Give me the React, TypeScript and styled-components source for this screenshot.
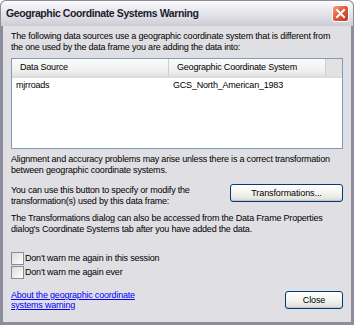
import React from "react";
import styled, { createGlobalStyle } from "styled-components";

const Global = createGlobalStyle`
  html, body { margin: 0; padding: 0; background: #ffffff; }
  body { font-family: "Liberation Sans", Arial, sans-serif; }
`;

const Window = styled.div`
  width: 354px;
  height: 325px;
  box-sizing: border-box;
  display: flex;
  flex-direction: column;
  background: #8d8c9c;
  padding: 0 3px 3px 3px;
  border-radius: 6px 6px 0 0;
  overflow: hidden;
`;

const TitleBar = styled.div`
  height: 26px;
  margin: 0 -3px;
  padding: 0 3px 0 5px;
  display: flex;
  align-items: center;
  justify-content: space-between;
  background: linear-gradient(#fdfdfe 0%, #ececf1 30%, #dcdbe3 70%, #cecdd7 100%);
  border: 1px solid #8d8c9c;
  border-bottom: none;
  border-radius: 6px 6px 0 0;
  box-sizing: border-box;
`;

const Title = styled.div`
  font-family: "Liberation Sans", Arial, sans-serif;
  font-weight: bold;
  font-size: 10.5px;
  color: #1c1c2c;
  letter-spacing: -0.4px;
  margin-top: -1px;
`;

const CloseBtn = styled.div`
  width: 17px;
  height: 17px;
  border: 1px solid #ffffff;
  border-radius: 3px;
  background: linear-gradient(135deg, #f0a58a 0%, #e05d3b 45%, #c13a1e 100%);
  display: flex;
  align-items: center;
  justify-content: center;
  box-sizing: border-box;
  margin-right: 1px;
  margin-top: -1px;
`;

const Body = styled.div`
  flex: 1;
  background: #e0dfe3;
  padding: 4px 8px 0 8px;
  display: flex;
  flex-direction: column;
  font-size: 9px;
  letter-spacing: -0.2px;
  color: #000;
  line-height: 11px;
`;

const Para = styled.p<{ $mt?: number }>`
  margin: ${(p) => p.$mt ?? 0}px 0 0 0;
`;

const SideText = styled(Para)`
  width: 200px;
`;

const List = styled.div`
  margin-top: 5px;
  height: 89px;
  background: #fff;
  border: 1px solid #7f9db9;
  display: flex;
  flex-direction: column;
`;

const HeaderRow = styled.div`
  display: flex;
  height: 19px;
  background: linear-gradient(#fbfbfb, #f0f0f0 70%, #e3e3e3);
  border-bottom: 2px solid #dcdcdc;
  box-sizing: border-box;
`;

const HeaderCell = styled.div<{ $w?: number; $filler?: boolean }>`
  ${(p) => (p.$w ? `width: ${p.$w}px;` : "flex: 1;")}
  display: flex;
  align-items: center;
  padding-left: ${(p) => (p.$filler ? 0 : 8)}px;
  box-sizing: border-box;
  border-right: ${(p) => (p.$filler ? "none" : "1px solid #cfcfcf")};
  background: ${(p) => (p.$filler ? "#e2e2e2" : "transparent")};
  color: #000;
`;

const DataRow = styled.div`
  display: flex;
  height: 14px;
  align-items: center;
`;

const DataCell = styled.div<{ $w?: number }>`
  ${(p) => (p.$w ? `width: ${p.$w}px;` : "flex: 1;")}
  padding-left: 4px;
  box-sizing: border-box;
`;

const ButtonRow = styled.div`
  display: flex;
  justify-content: space-between;
  align-items: flex-start;
  margin-top: 9px;
`;

const Button = styled.button<{ $w: number }>`
  width: ${(p) => p.$w}px;
  height: 18px;
  font-family: "Liberation Sans", Arial, sans-serif;
  font-size: 9px;
  letter-spacing: -0.1px;
  color: #000;
  border: 1px solid #003c74;
  border-radius: 3px;
  background: linear-gradient(#ffffff 0%, #f4f4f0 50%, #e6e5df 85%, #d6d0c5 100%);
  box-shadow: inset 0 -1px 0 #c5c3d6, inset 0 1px 0 #fff;
  padding: 0;
  margin-top: -1px;
`;

const Checks = styled.div`
  margin-top: 17px;
  display: flex;
  flex-direction: column;
  gap: 1px;
`;

const CheckRow = styled.label`
  display: flex;
  align-items: center;
  gap: 1px;
  height: 13px;
`;

const Box = styled.span`
  width: 11px;
  height: 11px;
  border: 1px solid #8a8a9a;
  background: linear-gradient(135deg, #dcdcd7, #ffffff);
  display: inline-block;
`;

const Footer = styled.div`
  margin-top: 11px;
  display: flex;
  justify-content: space-between;
  align-items: center;
`;

const Link = styled.a`
  color: #0000ff;
  text-decoration: underline;
  width: 140px;
  line-height: 10px;
  cursor: pointer;
`;

export default function App() {
  return (
    <>
      <Global />
      <Window>
        <TitleBar>
          <Title>Geographic Coordinate Systems Warning</Title>
          <CloseBtn>
            <svg width="11" height="11" viewBox="0 0 11 11">
              <path d="M2 2 L9 9 M9 2 L2 9" stroke="#fff" strokeWidth="2" strokeLinecap="square" />
            </svg>
          </CloseBtn>
        </TitleBar>
        <Body>
          <Para $mt={1}>
            The following data sources use a geographic coordinate system that is different from the one used by the data frame you are adding the data into:
          </Para>
          <List>
            <HeaderRow>
              <HeaderCell $w={157}>Data Source</HeaderCell>
              <HeaderCell $w={157}>Geographic Coordinate System</HeaderCell>
              <HeaderCell $filler />
            </HeaderRow>
            <DataRow>
              <DataCell $w={157}>mjrroads</DataCell>
              <DataCell>GCS_North_American_1983</DataCell>
            </DataRow>
          </List>
          <Para $mt={5}>
            Alignment and accuracy problems may arise unless there is a correct transformation between geographic coordinate systems.
          </Para>
          <ButtonRow>
            <SideText>
              You can use this button to specify or modify the transformation(s) used by this data frame:
            </SideText>
            <Button $w={113}>Transformations...</Button>
          </ButtonRow>
          <Para $mt={6}>
            The Transformations dialog can also be accessed from the Data Frame Properties dialog's Coordinate Systems tab after you have added the data.
          </Para>
          <Checks>
            <CheckRow>
              <Box />
              Don't warn me again in this session
            </CheckRow>
            <CheckRow>
              <Box />
              Don't warn me again ever
            </CheckRow>
          </Checks>
          <Footer>
            <Link>About the geographic coordinate systems warning</Link>
            <Button $w={58}>Close</Button>
          </Footer>
        </Body>
      </Window>
    </>
  );
}
